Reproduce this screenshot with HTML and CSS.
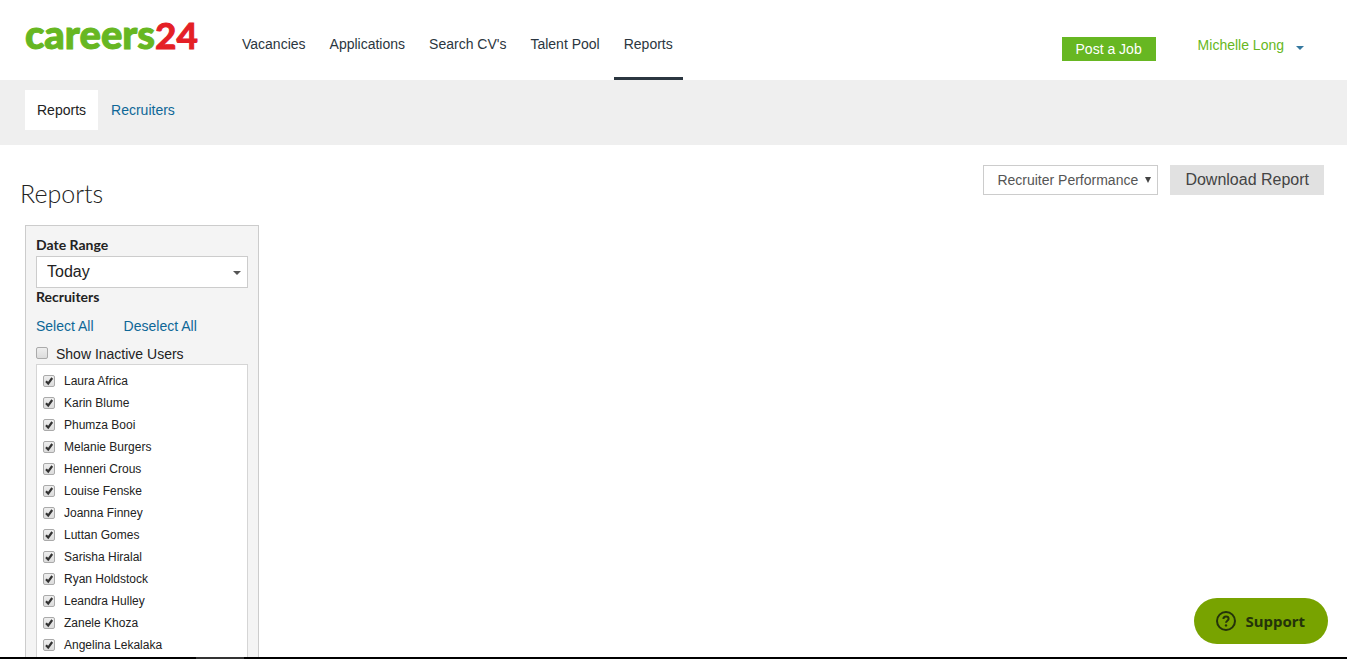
FILE: index.html
```html
<!DOCTYPE html>
<html lang="en">
<head>
<meta charset="utf-8">
<title>Careers24 - Reports</title>
<link rel="stylesheet" href="styles.css">
</head>
<body>
<header class="header">
  <a class="logo" href="#"><span class="logo-word">careers</span><span class="logo-number">24</span></a>
  <nav class="nav" aria-label="Main">
    <a class="nav-link" href="#">Vacancies</a>
    <a class="nav-link" href="#">Applications</a>
    <a class="nav-link" href="#">Search CV's</a>
    <a class="nav-link" href="#">Talent Pool</a>
    <a class="nav-link nav-active" href="#">Reports</a>
  </nav>
  <div class="account">
    <button class="post-job" type="button">Post a Job</button>
    <a class="user" href="#">Michelle Long
      <svg class="user-caret" viewBox="0 0 8 4" aria-hidden="true"><path d="M0 0h8L4 4z"/></svg>
    </a>
  </div>
</header>
<nav class="subnav" aria-label="Reports">
  <a class="tab tab-active" href="#">Reports</a>
  <a class="tab" href="#">Recruiters</a>
</nav>
<main class="main">
  <div class="title-row">
    <h1 class="title">Reports</h1>
    <div class="actions">
      <div class="select-wrap report-wrap">
        <select class="select report-select" aria-label="Report type"><option>Recruiter Performance</option></select>
        <svg class="report-caret" viewBox="0 0 6 6" aria-hidden="true"><path d="M0 0h6L3 6z"/></svg>
      </div>
      <button class="download" type="button">Download Report</button>
    </div>
  </div>
  <section class="panel">
    <label class="panel-label" for="range">Date Range</label>
    <div class="select-wrap">
      <select class="select range-select" id="range"><option>Today</option></select>
      <svg class="range-caret" viewBox="0 0 8 4" aria-hidden="true"><path d="M0 0h8L4 4z"/></svg>
    </div>
    <h2 class="panel-label">Recruiters</h2>
    <div class="links"><a href="#">Select All</a><a href="#">Deselect All</a></div>
    <label class="inactive"><input class="check" type="checkbox">Show Inactive Users</label>
    <div class="list">
      <label class="person"><input class="check" type="checkbox" checked>Laura Africa</label>
      <label class="person"><input class="check" type="checkbox" checked>Karin Blume</label>
      <label class="person"><input class="check" type="checkbox" checked>Phumza Booi</label>
      <label class="person"><input class="check" type="checkbox" checked>Melanie Burgers</label>
      <label class="person"><input class="check" type="checkbox" checked>Henneri Crous</label>
      <label class="person"><input class="check" type="checkbox" checked>Louise Fenske</label>
      <label class="person"><input class="check" type="checkbox" checked>Joanna Finney</label>
      <label class="person"><input class="check" type="checkbox" checked>Luttan Gomes</label>
      <label class="person"><input class="check" type="checkbox" checked>Sarisha Hiralal</label>
      <label class="person"><input class="check" type="checkbox" checked>Ryan Holdstock</label>
      <label class="person"><input class="check" type="checkbox" checked>Leandra Hulley</label>
      <label class="person"><input class="check" type="checkbox" checked>Zanele Khoza</label>
      <label class="person"><input class="check" type="checkbox" checked>Angelina Lekalaka</label>
    </div>
  </section>
</main>
<div class="edge"></div>
<button class="support" type="button">
  <svg class="support-icon" viewBox="0 0 20 20" aria-hidden="true">
    <circle cx="10" cy="10" r="9"/>
    <path d="M7.4 8c0-1.6 1.1-2.6 2.6-2.6s2.6 1 2.6 2.4c0 1.900-2.600 2-2.600 4"/>
    <circle class="support-dot" cx="10" cy="14.400" r="1.200"/>
  </svg>
  Support
</button>
</body>
</html>
```

FILE: styles.css
```css
* { box-sizing: border-box; }
body {
  margin: 0;
  height: 100vh;
  overflow: hidden;
  display: flex;
  flex-direction: column;
  background: #fff;
  color: #222;
  font: 14px/20px "Liberation Sans", Arial, sans-serif;
}
a { color: #0e6797; text-decoration: none; }
button, select { font-family: inherit; }

.header { flex: none; display: flex; height: 80px; padding: 0 43px 0 25px; }
.logo { width: 207px; font: 900 40px/48px Lato, sans-serif; padding-top: 10px; display: flex; align-items: baseline; }
.logo-word { color: #67b722; -webkit-text-stroke: 1px #67b722; }
.logo-number { color: #e42026; font-size: 37px; font-weight: 700; -webkit-text-stroke: 1px #e42026; }
.nav { display: flex; gap: 4px; }
.nav-link { padding: 34px 10px 0; color: #2b3640; border-bottom: 3px solid transparent; }
.nav-active { border-bottom-color: #2b3640; }
.account { margin-left: auto; display: flex; align-items: flex-start; gap: 42px; padding-top: 35px; }
.post-job {
  min-width: 94px;
  height: 24px;
  margin-top: 2px;
  padding: 0 13px;
  border: 0;
  background: #67b722;
  color: #fff;
  font-size: 14px;
}
.user { color: #67b722; display: flex; align-items: center; gap: 12px; }
.user-caret { width: 8px; height: 4px; margin-top: 6px; fill: #34789f; }

.subnav { flex: none; display: flex; height: 65px; padding: 10px 25px; background: #efefef; }
.tab { height: 40px; padding: 10px 12px; }
.tab + .tab { margin-left: 1px; }
.tab-active { background: #fff; color: #222; }

.main { flex: 1; min-height: 0; display: flex; flex-direction: column; padding: 20px 23px 0 20px; }
.title-row { flex: none; height: 60px; display: flex; justify-content: space-between; align-items: flex-start; }
.title { margin: 12px 0 0; font: 300 25px/32px Lato, sans-serif; }
.actions { display: flex; gap: 12px; }
.select-wrap { position: relative; }
.select {
  display: block;
  width: 100%;
  margin: 0;
  appearance: none;
  border: 1px solid #ccc;
  border-radius: 0;
  background: #fff;
}
.report-wrap { width: 175px; }
.report-select { height: 30px; padding: 0 13px; color: #555; font-size: 14px; }
.report-caret { position: absolute; right: 7px; top: 12px; width: 6px; height: 6px; fill: #444; }
.download { height: 30px; padding: 0 15px; border: 0; background: #e1e1e1; color: #444; font-size: 16px; }

.panel {
  flex: 1;
  min-height: 0;
  width: 234px;
  margin-left: 5px;
  padding: 10px 10px 0;
  border: 1px solid #ccc;
  border-bottom: 0;
  background: #f4f4f4;
  display: flex;
  flex-direction: column;
}
.panel-label { display: block; margin: 0; padding-bottom: 2px; font: 700 14px/18px Lato, sans-serif; }
.range-select { height: 32px; padding: 0 10px 2px; color: #222; font-size: 16px; }
.range-caret { position: absolute; right: 7px; top: 15px; width: 8px; height: 4px; fill: #555; }
.links { display: flex; gap: 30px; padding: 8px 0; }
.inactive { display: flex; align-items: center; gap: 8px; }
.check {
  appearance: none;
  flex: none;
  width: 12px;
  height: 12px;
  margin: 0;
  border: 1px solid #aaa;
  border-radius: 2px;
  background: linear-gradient(#eee, #dcdcdc);
}
.inactive .check { margin-bottom: 2px; }
.check:checked { background: url("data:image/svg+xml,%3Csvg xmlns='http://www.w3.org/2000/svg' viewBox='0 0 10 10'%3E%3Cpath d='M2 5.300L4.200 7.600L8.200 2' fill='none' stroke='%23333' stroke-width='2.200'/%3E%3C/svg%3E"), linear-gradient(#eee, #dcdcdc); }
.list { flex: 1; min-height: 0; overflow: hidden; padding: 5px 6px; border: 1px solid #d5d5d5; border-bottom: 0; background: #fff; }
.person { display: flex; align-items: center; gap: 9px; height: 22px; font-size: 12px; }

.edge { flex: none; height: 2px; background: linear-gradient(90deg, #000 196px, #333 196px, #333 244px, #000 244px); }
.support {
  position: fixed;
  right: 19px;
  bottom: 15px;
  height: 46px;
  padding: 0 23px 0 22px;
  border: 0;
  border-radius: 23px;
  background: #78a300;
  color: #24330a;
  display: flex;
  align-items: center;
  gap: 9px;
  font: 700 15px/20px "Noto Sans", sans-serif;
}
.support-icon { width: 20px; height: 20px; fill: none; stroke: #24330a; stroke-width: 2; }
.support-icon .support-dot { fill: #24330a; stroke: none; }
```
